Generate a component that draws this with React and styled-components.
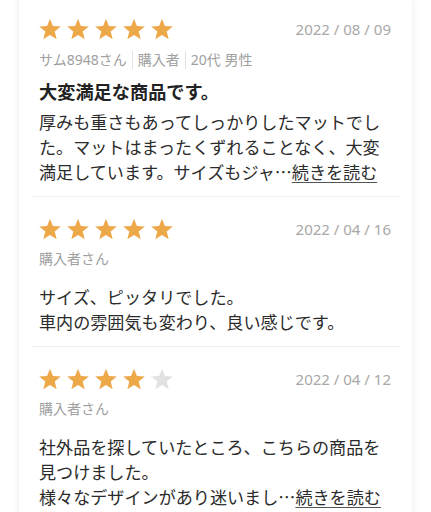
import React from "react";
import styled, { createGlobalStyle } from "styled-components";

const Global = createGlobalStyle`
  html, body { margin: 0; padding: 0; background: #ffffff; }
  body { font-family: "Noto Sans CJK JP", "Noto Sans", sans-serif; overflow: hidden; }
`;

const Page = styled.div`
  width: 431px;
  height: 512px;
  overflow: hidden;
  background: #ffffff;
  padding: 0 19px;
  box-sizing: border-box;
`;

const Card = styled.div`
  margin-top: -2px;
  background: #fff;
  box-shadow: 0 0 7px rgba(0, 0, 0, 0.09);
  padding: 0 12px;
`;

const Review = styled.div`
  padding: ${(p) => (p.$first ? 19 : 20)}px 9px 12px 8px;
  border-bottom: 1px solid #eeeeee;
`;

const TopRow = styled.div`
  display: flex;
  align-items: center;
  justify-content: space-between;
  height: 24px;
`;

const Stars = styled.div`
  display: flex;
  gap: 4px;
  margin-left: -1px;
`;

const DateText = styled.div`
  font-family: "Noto Sans", "Noto Sans CJK JP", sans-serif;
  font-size: 15px;
  color: #a8a8a8;
`;

const Meta = styled.div`
  display: flex;
  align-items: center;
  margin-top: ${(p) => (p.$first ? 10 : 9)}px;
  font-family: "Noto Sans", "Noto Sans CJK JP", sans-serif;
  font-size: 14px;
  line-height: 18px;
  color: #a0a0a0;
`;

const MetaItem = styled.span`
  padding: 0 5px;
  border-left: 1px solid #e2e2e2;
  &:first-child { padding-left: 0; border-left: none; }
`;

const Title = styled.div`
  margin-top: 10px;
  font-size: 18.2px;
  line-height: 24px;
  font-weight: 700;
  color: #222;
`;

const Body = styled.div`
  margin-top: ${(p) => p.$mt}px;
  font-size: 17.1px;
  line-height: 25px;
  color: #2b2b2b;
  white-space: pre-line;
`;

const More = styled.a`
  color: #2b2b2b;
  text-decoration: underline;
  text-underline-offset: 3px;
  text-decoration-color: #555;
`;

const Star = ({ on }) => (
  <svg width="24" height="23" viewBox="0 0 24 23">
    <path
      d="M12 0.8 L14.9 8.1 L22.8 8.6 L16.7 13.6 L18.7 21.3 L12 17 L5.3 21.3 L7.3 13.6 L1.2 8.6 L9.1 8.1 Z"
      fill={on ? "#eda84a" : "#e2e2e2"}
    />
  </svg>
);

const reviews = [
  {
    rating: 5,
    date: "2022 / 08 / 09",
    meta: ["サム8948さん", "購入者", "20代 男性"],
    title: "大変満足な商品です。",
    body: "厚みも重さもあってしっかりしたマットでした。マットはまったくずれることなく、大変満足しています。サイズもジャ…",
    more: true,
  },
  {
    rating: 5,
    date: "2022 / 04 / 16",
    meta: ["購入者さん"],
    title: "",
    body: "サイズ、ピッタリでした。\n車内の雰囲気も変わり、良い感じです。",
    more: false,
  },
  {
    rating: 4,
    date: "2022 / 04 / 12",
    meta: ["購入者さん"],
    title: "",
    body: "社外品を探していたところ、こちらの商品を見つけました。\n様々なデザインがあり迷いまし…",
    more: true,
  },
];

export default function App() {
  return (
    <>
      <Global />
      <Page>
        <Card>
          {reviews.map((r, i) => (
            <Review key={i} $first={i === 0}>
              <TopRow>
                <Stars>
                  {[0, 1, 2, 3, 4].map((s) => (
                    <Star key={s} on={s < r.rating} />
                  ))}
                </Stars>
                <DateText>{r.date}</DateText>
              </TopRow>
              <Meta $first={i === 0}>
                {r.meta.map((m, j) => (
                  <MetaItem key={j}>{m}</MetaItem>
                ))}
              </Meta>
              {r.title && <Title>{r.title}</Title>}
              <Body $mt={r.title ? 6 : 16}>
                {r.body}
                {r.more && <More href="#">続きを読む</More>}
              </Body>
            </Review>
          ))}
        </Card>
      </Page>
    </>
  );
}
